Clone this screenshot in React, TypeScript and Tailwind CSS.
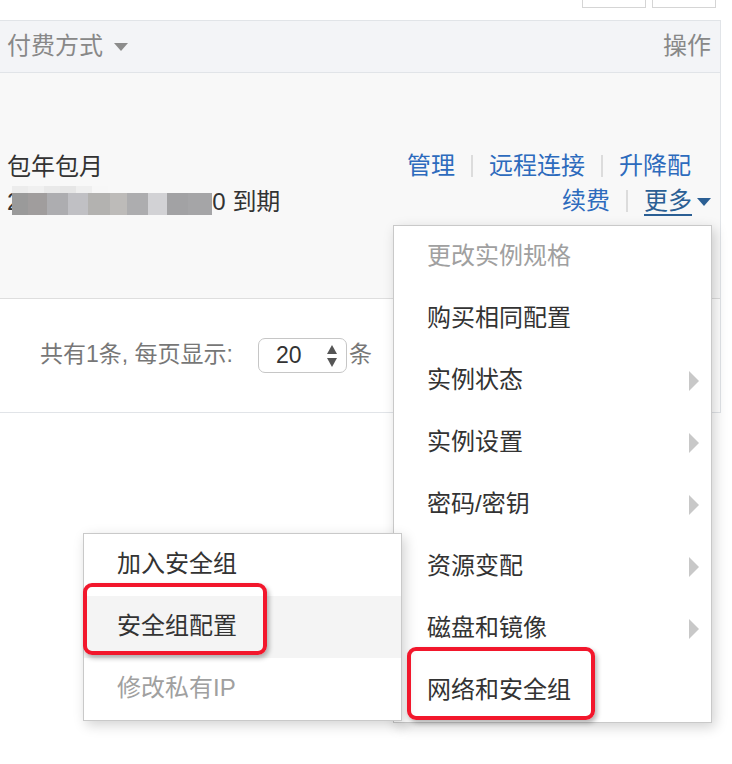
import React from 'react';

const font = 'font-["Liberation_Sans","Noto_Sans_CJK_SC",sans-serif]';

const mainItems = [
  { label: '更改实例规格', disabled: true, sub: false },
  { label: '购买相同配置', disabled: false, sub: false },
  { label: '实例状态', disabled: false, sub: true },
  { label: '实例设置', disabled: false, sub: true },
  { label: '密码/密钥', disabled: false, sub: true },
  { label: '资源变配', disabled: false, sub: true },
  { label: '磁盘和镜像', disabled: false, sub: true },
  { label: '网络和安全组', disabled: false, sub: false },
];

const subItems = [
  { label: '加入安全组', disabled: false, active: false },
  { label: '安全组配置', disabled: false, active: true },
  { label: '修改私有IP', disabled: true, active: false },
];

const mosaicTop = ['#ececec', '#f0f0f0', '#e9e9e9', '#e6e6e6', '#efefef', '#f7f7f7'];
const mosaicBottom = [
  'bg-[#9a9a9a] w-[16px]',
  'bg-[#a09d9d] w-[19px]',
  'bg-[#adadb0] w-[21px]',
  'bg-[#c0c0c4] w-[20px]',
  'bg-[#b3b2b0] w-[22px]',
  'bg-[#bdbbb9] w-[17px]',
  'bg-[#adadaf] w-[21px]',
  'bg-[#d2d2d5] w-[19px]',
  'bg-[#a2a2a4] w-[21px]',
  'bg-[#a5a5a7] w-[24px]',
];

const Arrow = () => (
  <svg width="10" height="20" viewBox="0 0 10 20">
    <polygon points="0,0 10,10 0,20" fill="#c8c8c8" />
  </svg>
);

const Sep = () => <span className="mx-[16px] inline-block h-[22px] w-[2px] bg-[#dcdcdc]" />;

export default function App() {
  return (
    <div className={`relative w-[732px] h-[764px] overflow-hidden bg-white text-[24px] text-[#333] ${font}`}>
      {/* top toolbar (cut off) */}
      <div className="flex h-[20px] justify-end gap-[6px] pr-[16px]">
        <div className="h-[8px] w-[64px] border border-t-0 border-[#d5d5d5] bg-white" />
        <div className="h-[8px] w-[64px] border border-t-0 border-[#d5d5d5] bg-white" />
      </div>

      <div className="w-[721px] border-t border-r border-[#e1e4e8]">
        <div className="flex h-[52px] items-center justify-between border-b border-[#e1e4e8] bg-[#f3f4f7] pb-[2px] pl-[7px] pr-[9px] text-[#888]">
          <div className="flex items-center">
            <span>付费方式</span>
            <svg className="ml-[11px] mt-[2px]" width="14" height="8" viewBox="0 0 14 8">
              <polygon points="0,0 14,0 7,8" fill="#8c8c8c" />
            </svg>
          </div>
          <span>操作</span>
        </div>

        <div className="flex h-[226px] items-center justify-between border-b border-[#dedede] bg-[#f8f8f8] pb-[4px] pl-[7px] pr-[9px]">
          <div className="flex flex-col">
            <div className="h-[35px] leading-[35px]">包年包月</div>
            <div className="flex h-[35px] items-center leading-[35px]">
              <span>2</span>
              <div className="-ml-[8px] mt-[-1px] flex h-[29px] w-[200px] flex-col">
                <div className="flex h-[7px]">
                  {mosaicTop.map((c, i) => (
                    <div key={i} className="h-full w-[16px]" style={{ backgroundColor: c }} />
                  ))}
                </div>
                <div className="flex h-[22px]">
                  {mosaicBottom.map((c, i) => (
                    <div key={i} className={`h-full ${c}`} />
                  ))}
                </div>
              </div>
              <span>0 到期</span>
            </div>
          </div>
          <div className="flex flex-col items-end text-[#2d6bbd]">
            <div className="flex h-[35px] items-center pr-[20px]">
              <span>管理</span>
              <Sep />
              <span>远程连接</span>
              <Sep />
              <span>升降配</span>
            </div>
            <div className="flex h-[35px] items-center">
              <span>续费</span>
              <Sep />
              <span className="text-[#2b5f94] underline underline-offset-[5px]">更多</span>
              <svg className="ml-[5px] mt-[2px]" width="14" height="8" viewBox="0 0 14 8">
                <polygon points="0,0 14,0 7,8" fill="#2b5f94" />
              </svg>
            </div>
          </div>
        </div>

        <div className="flex h-[114px] items-center border-b border-[#e1e4e8] pl-[40px] text-[23px] text-[#777]">
          <span className="-mt-[2px]">共有1条, 每页显示:</span>
          <div className="ml-[25px] flex h-[35px] w-[89px] items-center justify-between rounded-[7px] border border-[#c6c6c6] bg-white pl-[17px] pr-[8px] text-[23px] text-[#333]">
            <span className="-mt-[1px]">20</span>
            <svg width="12" height="24" viewBox="0 0 12 24">
              <polygon points="6,1 11,10 1,10" fill="#555" />
              <polygon points="1,14 11,14 6,23" fill="#555" />
            </svg>
          </div>
          <span className="-mt-[2px] ml-[2px]">条</span>
        </div>
      </div>

      {/* more dropdown */}
      <div className="absolute left-[393px] top-[225px] w-[319px] border border-[#c9c9c9] bg-white shadow-[3px_4px_12px_rgba(0,0,0,0.18)]">
        {mainItems.map((it) => (
          <div
            key={it.label}
            className={`flex h-[62px] items-center justify-between pl-[33px] pr-[12px] ${it.disabled ? 'text-[#a0a0a0]' : 'text-[#333]'}`}
          >
            <span className="-mt-[3px]">{it.label}</span>
            {it.sub && <Arrow />}
          </div>
        ))}
      </div>

      {/* submenu */}
      <div className="absolute left-[83px] top-[533px] w-[319px] border border-[#c9c9c9] bg-white shadow-[3px_4px_12px_rgba(0,0,0,0.18)]">
        {subItems.map((it) => (
          <div
            key={it.label}
            className={`flex h-[62px] items-center pl-[33px] ${it.active ? 'bg-[#f4f4f4]' : ''} ${it.disabled ? 'text-[#a0a0a0]' : 'text-[#333]'}`}
          >
            <span className="-mt-[3px]">{it.label}</span>
          </div>
        ))}
      </div>

      {/* highlight boxes */}
      <div className="absolute left-[83px] top-[583px] h-[72px] w-[184px] rounded-[9px] border-[4px] border-[#f2172c] shadow-[2px_3px_5px_rgba(0,0,0,0.3)]" />
      <div className="absolute left-[407px] top-[647px] h-[73px] w-[188px] rounded-[9px] border-[4px] border-[#f2172c] shadow-[2px_3px_5px_rgba(0,0,0,0.3)]" />
    </div>
  );
}
